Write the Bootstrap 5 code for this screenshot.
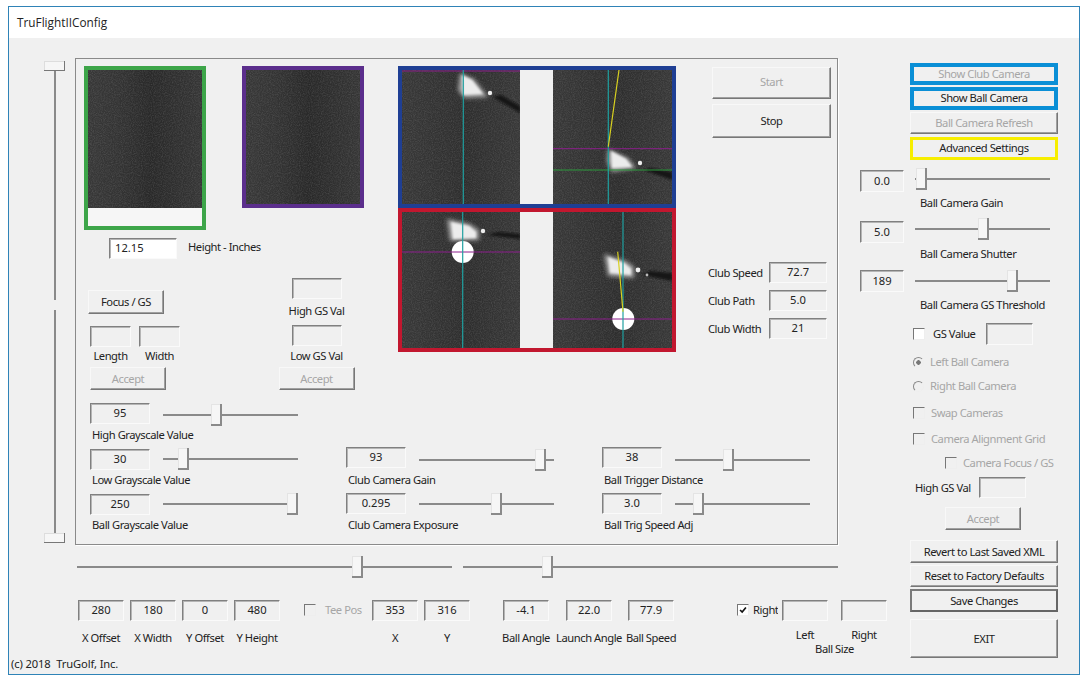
<!DOCTYPE html>
<html lang="en">
<head>
<meta charset="utf-8">
<title>TruFlightIIConfig</title>
<link href="https://cdn.jsdelivr.net/npm/bootstrap@5.3.0/dist/css/bootstrap.min.css" rel="stylesheet">
<style>
html,body{margin:0;background:#fff;}
body{font-family:"Noto Sans","Liberation Sans",sans-serif;font-size:11.2px;line-height:14px;letter-spacing:-.45px;color:#222;}
.win{margin:6px 0 0 8px;width:1072px;height:669px;border:1px solid #2f83b7;background:#f0f0f0;display:flex;flex-direction:column;overflow:hidden;}
.ttl{height:31px;flex:none;background:#fff;padding-left:8px;font-family:"Open Sans",sans-serif;font-size:11.8px;line-height:30px;letter-spacing:0;color:#222;}
.dlg{display:flex;flex:1;min-height:0;}
.lft{width:901px;flex:none;}
.rgt{width:148px;flex:none;padding-top:25px;}
.upper{display:flex;padding-top:20px;height:507px;}
.vs{width:21px;margin:3px 10px 0 35px;height:482px;display:flex;flex-direction:column;align-items:center;}
.vs-th{width:21px;height:10px;flex:none;background:#f6f6f6;box-shadow:inset -1px -1px 0 #777,inset 1px 1px 0 #ddd;}
.vs-ln{width:2px;background:#8a8a8a;}
.vs-a{height:229px;}
.vs-b{height:223px;margin-top:10px;}
.pnl{width:763px;height:487px;border:1px solid #8a8a8a;padding:7px 0 0 8px;box-shadow:1px 1px 0 #fff;}
.ptop{display:flex;height:324px;}
.pleft{width:314px;flex:none;}
.frames{display:flex;align-items:flex-start;gap:36px;}
.frm{width:122px;border:4px solid;background:#f6f6f6;}
.frm-g{height:164px;border-color:#3da549;}
.frm-p{height:142px;border-color:#5b2e8c;}
.shot{display:block;width:114px;}
.h138{height:138px;}
.h134{height:134px;}
.hrow{display:flex;align-items:center;margin:8px 0 0 25px;gap:11px;}
.hrow span{margin-top:-3px;}
.w68{width:68px;}
.lower{display:flex;}
.lc1{width:194px;padding-left:4px;padding-top:31px;}
.lc2{width:77px;padding-top:19px;display:flex;flex-direction:column;align-items:center;}
.pair{display:flex;gap:8px;margin:12px 0 0 2px;}
.stackc{display:flex;flex-direction:column;align-items:center;width:41px;}
.vid{display:block;width:278px;height:286px;flex:none;}
.pright{width:119px;margin-left:36px;flex:none;padding-top:1px;}
.clubs{margin:124px 0 0 -4px;display:flex;flex-direction:column;gap:7px;}
.crow{display:flex;align-items:center;}
.crow span{width:61px;}
.w58{width:58px;}
.w50{width:50px;}
.ctrls{display:flex;padding:13px 0 0 6px;}
.ccol{width:256px;flex:none;}
.ccol-s{padding-top:44px;}
.sg46{height:46px;}
.sg45{height:45px;}
.srow{display:flex;gap:13px;align-items:flex-start;}
.w60{width:60px;}
.lp2{padding:2px 0 0 2px;}
.lp3{padding:3px 0 0 2px;}
.hs{display:flex;padding:11px 0 0 68px;gap:11px;}
.fields{display:flex;padding:22px 0 0 69px;height:72px;}
.fld{display:flex;flex-direction:column;align-items:center;width:46px;flex:none;}
.fld span{margin-top:10px;white-space:nowrap;}
.fld .near{margin-top:7px;}
.chk{display:flex;align-items:center;}
.ballbox{display:flex;flex-direction:column;align-items:center;width:105px;margin-left:4px;}
.ballins{display:flex;gap:13px;}
.copy{padding-left:2px;margin-top:7px;letter-spacing:-.12px;}
.off{color:#a6a6a6;}
.ink{white-space:nowrap;}
.teel{width:47px;margin-left:9px;}
.rgl{width:25px;overflow:hidden;margin-left:4px;}
.ms63{margin-left:63px;}
.ml2{margin-left:2px;}
/* sunken edit box */
.form-control.edt{height:21px;min-height:0;padding:0 0 2px;border-radius:0;font-size:11.2px;line-height:17px;letter-spacing:0;text-align:center;color:#222;background:#f0f0f0;border:1px solid;border-color:#808080 #fafafa #fafafa #808080;box-shadow:inset 1px 1px 0 #b5b5b5;flex:none;}
.form-control.edt:disabled,.form-control.edt[readonly]{background:#f0f0f0;opacity:1;}
.form-control.edt.wht{background:#fff;text-align:left;padding-left:5px;}
.h22{height:22px!important;}
/* raised button */
.btn.bvl{display:block;padding:0;border-radius:0;font-size:11.2px;line-height:14px;letter-spacing:-.45px;color:#222;background:#f0f0f0;border:1px solid;border-color:#f8f8f8 #777 #777 #f8f8f8;box-shadow:inset -1px -1px 0 #a0a0a0;opacity:1;text-align:center;}
.btn.bvl:disabled{color:#a6a6a6;background:#f0f0f0;border-color:#f8f8f8 #777 #777 #f8f8f8;opacity:1;}
.bf{width:76px;height:24px;}
.ba{width:76px;height:23px;}
.bss{width:119px;height:32px;}
.btn.bvl.bss{padding-bottom:3px;}
.bst{width:119px;height:34px;margin-top:5px;}
.br{width:148px;height:23px;}
.br22{height:22px;}
.bexit{width:148px;height:39px;}
.btn.bvl.sv{border:2px solid;border-color:#7a7a7a #666 #666 #7a7a7a;box-shadow:none;}
.btn.bvl.blu{border:4px solid #0a8fd6;box-shadow:none;height:23px;width:148px;padding-bottom:2px;}
.btn.bvl.blu:disabled{border-color:#0a8fd6;height:22px;}
.btn.bvl.yel{border:3px solid #f7ee00;box-shadow:none;height:23px;width:148px;padding-bottom:2px;}
/* track bars */
.form-range.trk{height:22px;display:block;flex:none;}
.form-range.trk::-webkit-slider-runnable-track{height:2px;background:#8a8a8a;border-radius:0;}
.form-range.trk::-webkit-slider-thumb{width:11px;height:22px;margin-top:-10px;border-radius:0;background:#f6f6f6;box-shadow:inset -2px -2px 0 #8a8a8a,inset 1px 1px 0 #e4e4e4;-webkit-appearance:none;appearance:none;}
.w135{width:135px;}
.w375{width:375px;}
.up1{margin-top:1px;}
.up2{margin-top:2px;}
.up-1{margin-top:-1px;}
.up-2{margin-top:-2px;}
.up-3{margin-top:-3px;}
/* check + radio */
.form-check-input.ck{width:12px;height:12px;margin:0;flex:none;border-radius:0;background-color:#fff;border:1px solid;border-color:#777 #eee #eee #777;box-shadow:none;opacity:1;}
.form-check-input.ck:disabled{background-color:#f0f0f0;}
.form-check-input.ck:checked{background-color:#fff;border-color:#777 #eee #eee #777;background-image:url("data:image/svg+xml,%3csvg xmlns='http://www.w3.org/2000/svg' viewBox='0 0 12 12'%3e%3cpath fill='none' stroke='%23111' stroke-width='2' d='M2.5 6l2.5 2.5 4.5-5.5'/%3e%3c/svg%3e");}
.form-check-input.rd{width:11px;height:11px;margin:0;flex:none;border-radius:50%;background-color:#f0f0f0;border:1px solid;border-color:#888 #eee #eee #888;box-shadow:none;opacity:1;}
.form-check-input.rd:checked{background-color:#f0f0f0;background-image:radial-gradient(circle,#777 2px,transparent 2.5px);}
.opt{display:flex;align-items:center;height:14px;margin-left:3px;white-space:nowrap;}
.g6{gap:6px;}
.t1{margin-top:1px;}.t2{margin-top:2px;}.t3{margin-top:3px;}.t4{margin-top:4px;}.t5{margin-top:5px;}.t6{margin-top:6px;}.t7{margin-top:7px;}.t8{margin-top:8px;}.t9{margin-top:9px;}.t10{margin-top:10px;}.t11{margin-top:11px;}.t12{margin-top:12px;}.t13{margin-top:13px;}
.camr{display:flex;gap:11px;align-items:flex-start;margin-left:-50px;}
.w44{width:44px;}
.w47{width:47px;}
.lab3{padding-left:10px;}
.gsr{display:flex;align-items:center;margin-left:3px;}
.gsl{width:45px;margin-left:8px;margin-right:8px;}
.hgs{display:flex;align-items:center;gap:10px;margin-left:5px;white-space:nowrap;}
.hgs span{width:54px;}
.acc{margin-left:35px;}
.s1{margin-left:24px;}.s3{margin-left:33px;}.s4{margin-left:17px;}.s5{margin-left:16px;}.s6{margin-left:6px;}
</style>
</head>
<body>
<svg width="0" height="0" class="d-block" aria-hidden="true">
  <defs>
    <linearGradient id="gL" x1="0" x2="1" y1="0" y2="0"><stop offset="0" stop-color="#383838"/><stop offset=".55" stop-color="#2e2e2e"/><stop offset="1" stop-color="#383838"/></linearGradient>
    <linearGradient id="gS" x1="0" x2="1" y1="0" y2="0"><stop offset="0" stop-color="#383838"/><stop offset=".28" stop-color="#333"/><stop offset=".55" stop-color="#292929"/><stop offset=".8" stop-color="#303030"/><stop offset="1" stop-color="#363636"/></linearGradient>
    <filter id="grain" x="0" y="0" width="100%" height="100%"><feTurbulence type="fractalNoise" baseFrequency=".9" numOctaves="2" seed="4"/><feColorMatrix values="0 0 0 0 1  0 0 0 0 1  0 0 0 0 1  .22 0 0 0 -.08"/></filter>
    <filter id="bC" x="-30%" y="-30%" width="160%" height="160%"><feGaussianBlur stdDeviation="2.2"/></filter>
    <filter id="bA" x="-30%" y="-30%" width="160%" height="160%"><feGaussianBlur stdDeviation="1.1"/></filter>
    <filter id="bB" x="-30%" y="-30%" width="160%" height="160%"><feGaussianBlur stdDeviation=".6"/></filter>
  </defs>
</svg>
<div class="win">
  <div class="ttl">TruFlightIIConfig</div>
  <div class="dlg">
    <div class="lft">
      <div class="upper">
        <div class="vs">
          <div class="vs-th"></div><div class="vs-ln vs-a"></div><div class="vs-ln vs-b"></div><div class="vs-th"></div>
        </div>
        <div class="pnl">
          <div class="ptop">
            <div class="pleft">
              <div class="frames">
                <div class="frm frm-g"><svg class="shot h138" viewBox="0 0 114 138"><rect width="114" height="138" fill="url(#gS)"/><rect width="114" height="138" filter="url(#grain)"/></svg></div>
                <div class="frm frm-p"><svg class="shot h134" viewBox="0 0 114 134"><rect width="114" height="134" fill="url(#gS)"/><rect width="114" height="134" filter="url(#grain)"/></svg></div>
              </div>
              <div class="hrow"><input class="form-control edt wht w68" value="12.15"><span>Height - Inches</span></div>
              <div class="lower">
                <div class="lc1">
                  <button type="button" class="btn bvl bf">Focus / GS</button>
                  <div class="pair">
                    <div class="stackc"><input class="form-control edt w-100" readonly><span class="t2">Length</span></div>
                    <div class="stackc"><input class="form-control edt w-100" readonly><span class="t2">Width</span></div>
                  </div>
                  <button type="button" class="btn bvl ba t4 ml2" disabled>Accept</button>
                </div>
                <div class="lc2">
                  <input class="form-control edt w50" readonly>
                  <span class="t5">High GS Val</span>
                  <input class="form-control edt w50 t7" readonly>
                  <span class="t3">Low GS Val</span>
                  <button type="button" class="btn bvl ba t4" disabled>Accept</button>
                </div>
              </div>
            </div>
            <svg class="vid" viewBox="0 0 278 286" xmlns="http://www.w3.org/2000/svg">
              <defs>
                <clipPath id="cv"><rect x="4" y="4" width="118" height="134"/><rect x="155" y="4" width="119" height="134"/><rect x="4" y="146" width="118" height="136"/><rect x="155" y="146" width="119" height="136"/></clipPath>
              </defs>
              <rect width="278" height="142" fill="#1f3f94"/>
              <rect y="142" width="278" height="144" fill="#c2172f"/>
              <rect x="122" y="4" width="33" height="134" fill="#f0f0f0"/>
              <rect x="122" y="146" width="33" height="136" fill="#f0f0f0"/>
              <g clip-path="url(#cv)">
                <rect x="4" y="4" width="118" height="134" fill="url(#gL)"/>
                <rect x="155" y="4" width="119" height="134" fill="url(#gL)"/>
                <rect x="4" y="146" width="118" height="136" fill="url(#gL)"/>
                <rect x="155" y="146" width="119" height="136" fill="url(#gL)"/>
                <rect width="278" height="286" filter="url(#grain)"/>
                <path d="M95 31L122 47V40L103 29Z M246 104L274 114V106L252 102Z M89 169L122 173V168L100 166Z M245 209L274 215V207L252 205Z" fill="#151515" filter="url(#bA)"/>
                <path d="M62 7L76 13L90 31L66 32L60 24Z M210 83L230 92L238 102L214 106L209 96Z M49 153L72 158L81 164L81 174L52 175Z M206 188L228 195L236 201L236 212L210 210Z" fill="#a8a8a8" filter="url(#bC)"/>
                <path d="M64 9L74 14L85 28L65 29Z M213 85L228 93L234 101L214 102Z M53 156L71 160L78 166L78 172L55 173Z M210 191L226 197L233 203L233 209L212 207Z" fill="#ececec" filter="url(#bA)"/>
                <circle cx="92" cy="27" r="2.2" fill="#eee" filter="url(#bB)"/>
                <circle cx="242" cy="97" r="2.2" fill="#eee" filter="url(#bB)"/>
                <circle cx="85" cy="165" r="2.2" fill="#eee" filter="url(#bB)"/>
                <circle cx="240" cy="204" r="2.4" fill="#eee" filter="url(#bB)"/>
                <circle cx="249" cy="209" r="1.4" fill="#bbb" filter="url(#bB)"/>
                <circle cx="64.7" cy="186" r="11" fill="#fff" filter="url(#bB)"/>
                <circle cx="225.3" cy="253" r="11" fill="#fff" filter="url(#bB)"/>
                <g stroke-width="1" fill="none">
                  <path d="M4 5H122M155 82.7H274M4 186H122M155 253H274" stroke="#8c1f8c"/>
                  <path d="M155 104H274" stroke="#2c9a3c"/>
                  <path d="M65.3 4V138M210.3 4V138M64.7 146V282M225 146V282" stroke="#1fa0a0" stroke-width="1.2"/>
                  <path d="M221 4L210.3 80.7M219.7 185.7L225 245.7" stroke="#d8d020" stroke-width="1.2"/>
                </g>
              </g>
            </svg>
            <div class="pright">
              <button type="button" class="btn bvl bss" disabled>Start</button>
              <button type="button" class="btn bvl bst">Stop</button>
              <div class="clubs">
                <div class="crow"><span>Club Speed</span><input class="form-control edt w58" readonly value="72.7"></div>
                <div class="crow"><span>Club Path</span><input class="form-control edt w58" readonly value="5.0"></div>
                <div class="crow"><span>Club Width</span><input class="form-control edt w58" readonly value="21"></div>
              </div>
            </div>
          </div>
          <div class="ctrls">
            <div class="ccol">
              <div class="sg46"><div class="srow"><input class="form-control edt w60" readonly value="95"><input type="range" class="form-range trk w135 up1" min="0" max="124" value="48"></div><div class="lp2">High Grayscale Value</div></div>
              <div class="sg45"><div class="srow"><input class="form-control edt w60" readonly value="30"><input type="range" class="form-range trk w135 up-1" min="0" max="124" value="15"></div><div class="lp3">Low Grayscale Value</div></div>
              <div class="sg45"><div class="srow"><input class="form-control edt w60" readonly value="250"><input type="range" class="form-range trk w135 up-1" min="0" max="124" value="124"></div><div class="lp3">Ball Grayscale Value</div></div>
            </div>
            <div class="ccol ccol-s">
              <div class="sg46"><div class="srow"><input class="form-control edt w60" readonly value="93"><input type="range" class="form-range trk w135 up2" min="0" max="124" value="116"></div><div class="lp2">Club Camera Gain</div></div>
              <div class="sg45"><div class="srow"><input class="form-control edt w60" readonly value="0.295"><input type="range" class="form-range trk w135" min="0" max="124" value="72"></div><div class="lp3">Club Camera Exposure</div></div>
            </div>
            <div class="ccol ccol-s">
              <div class="sg46"><div class="srow"><input class="form-control edt w60" readonly value="38"><input type="range" class="form-range trk w135 up2" min="0" max="124" value="48"></div><div class="lp2">Ball Trigger Distance</div></div>
              <div class="sg45"><div class="srow"><input class="form-control edt w60" readonly value="3.0"><input type="range" class="form-range trk w135" min="0" max="124" value="18"></div><div class="lp3">Ball Trig Speed Adj</div></div>
            </div>
          </div>
        </div>
      </div>
      <div class="hs">
        <input type="range" class="form-range trk w375" min="0" max="364" value="275">
        <input type="range" class="form-range trk w375" min="0" max="364" value="79">
      </div>
      <div class="fields">
        <div class="fld"><input class="form-control edt w-100" readonly value="280"><span>X Offset</span></div>
        <div class="fld s6"><input class="form-control edt w-100" readonly value="180"><span>X Width</span></div>
        <div class="fld s6"><input class="form-control edt w-100" readonly value="0"><span>Y Offset</span></div>
        <div class="fld s6"><input class="form-control edt w-100" readonly value="480"><span>Y Height</span></div>
        <div class="chk s1 align-self-start t4"><input class="form-check-input ck" type="checkbox" disabled></div>
        <div class="off teel t3 ink">Tee Pos</div>
        <div class="fld"><input class="form-control edt w-100" readonly value="353"><span>X</span></div>
        <div class="fld s6"><input class="form-control edt w-100" readonly value="316"><span>Y</span></div>
        <div class="fld s3"><input class="form-control edt w-100" readonly value="-4.1"><span>Ball Angle</span></div>
        <div class="fld s4"><input class="form-control edt w-100" readonly value="22.0"><span>Launch Angle</span></div>
        <div class="fld s5"><input class="form-control edt w-100" readonly value="77.9"><span>Ball Speed</span></div>
        <div class="chk ms63 align-self-start t4"><input class="form-check-input ck" type="checkbox" checked></div>
        <div class="t3 ink rgl">Right</div>
        <div class="ballbox">
          <div class="ballins">
            <div class="fld"><input class="form-control edt w-100" readonly><span class="near">Left</span></div>
            <div class="fld"><input class="form-control edt w-100" readonly><span class="near">Right</span></div>
          </div>
          <div>Ball Size</div>
        </div>
      </div>
      <div class="copy">(c) 2018&nbsp; TruGolf, Inc.</div>
    </div>
    <div class="rgt">
      <button type="button" class="btn bvl blu" disabled>Show Club Camera</button>
      <button type="button" class="btn bvl blu t2">Show Ball Camera</button>
      <button type="button" class="btn bvl br br22 t2" disabled>Ball Camera Refresh</button>
      <button type="button" class="btn bvl yel t3">Advanced Settings</button>
      <div class="camr t10"><input class="form-control edt w44 h22" readonly value="0.0"><input type="range" class="form-range trk w135 up-2" min="0" max="124" value="1"></div>
      <div class="lab3 t4">Ball Camera Gain</div>
      <div class="camr t11"><input class="form-control edt w44 h22" readonly value="5.0"><input type="range" class="form-range trk w135 up-3" min="0" max="124" value="63"></div>
      <div class="lab3 t4">Ball Camera Shutter</div>
      <div class="camr t9"><input class="form-control edt w44 h22" readonly value="189"><input type="range" class="form-range trk w135" min="0" max="124" value="92"></div>
      <div class="lab3 t6">Ball Camera GS Threshold</div>
      <div class="gsr t11"><input class="form-check-input ck" type="checkbox"><span class="gsl">GS Value</span><input class="form-control edt w47 h22" readonly></div>
      <div class="opt g6 t10 off"><input class="form-check-input rd" type="radio" name="cam" checked disabled><span>Left Ball Camera</span></div>
      <div class="opt g6 t10 off"><input class="form-check-input rd" type="radio" name="cam" disabled><span>Right Ball Camera</span></div>
      <div class="opt g6 t13 off"><input class="form-check-input ck" type="checkbox" disabled><span>Swap Cameras</span></div>
      <div class="opt g6 t12 off"><input class="form-check-input ck" type="checkbox" disabled><span>Camera Alignment Grid</span></div>
      <div class="opt g6 t10 off acc"><input class="form-check-input ck" type="checkbox" disabled><span>Camera Focus / GS</span></div>
      <div class="hgs t7"><span>High GS Val</span><input class="form-control edt w47" readonly></div>
      <button type="button" class="btn bvl ba t9 acc" disabled>Accept</button>
      <button type="button" class="btn bvl br t10">Revert to Last Saved XML</button>
      <button type="button" class="btn bvl br br22 t2">Reset to Factory Defaults</button>
      <button type="button" class="btn bvl br sv t2">Save Changes</button>
      <button type="button" class="btn bvl bexit t7">EXIT</button>
    </div>
  </div>
</div>
<script src="https://cdn.jsdelivr.net/npm/bootstrap@5.3.0/dist/js/bootstrap.bundle.min.js"></script>
</body>
</html>
